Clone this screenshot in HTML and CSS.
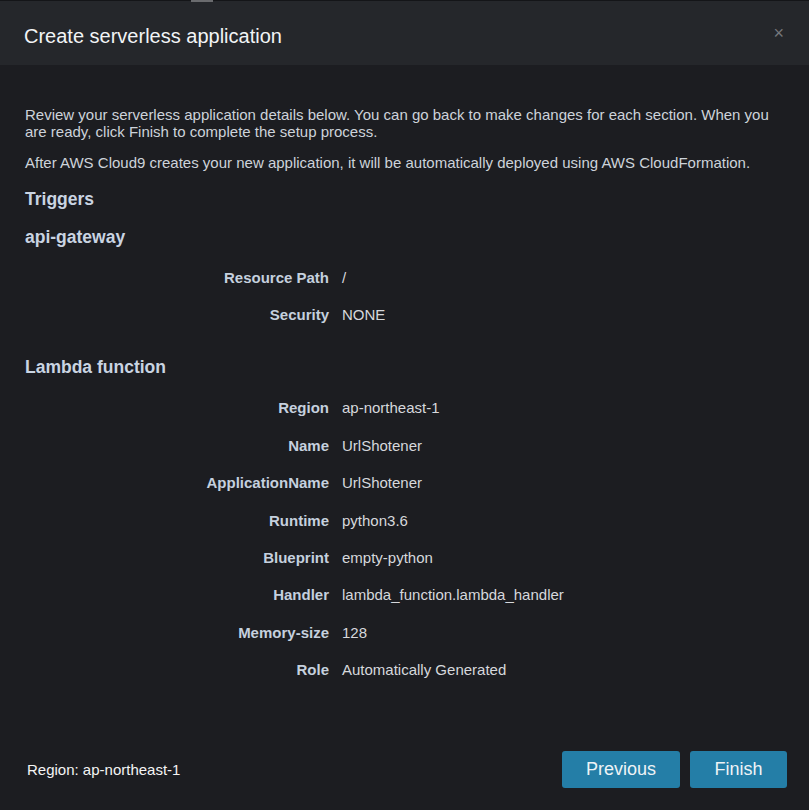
FILE: index.html
```html
<!DOCTYPE html>
<html>
<head>
<meta charset="utf-8">
<link rel="stylesheet" href="styles.css">
</head>
<body>
<div class="topline"><span class="tab"></span></div>
<div class="dialog">
  <header class="head">
    <h1 class="title">Create serverless application</h1>
    <span class="close">×</span>
  </header>
  <main class="content">
    <p class="intro">Review your serverless application details below. You can go back to make changes for each section. When you are ready, click Finish to complete the setup process.</p>
    <p class="intro">After AWS Cloud9 creates your new application, it will be automatically deployed using AWS CloudFormation.</p>
    <h2 class="h-main">Triggers</h2>
    <h3 class="h-sub">api-gateway</h3>
    <dl class="details">
      <div class="row"><dt>Resource Path</dt><dd>/</dd></div>
      <div class="row"><dt>Security</dt><dd>NONE</dd></div>
    </dl>
    <h3 class="h-sub h-lambda">Lambda function</h3>
    <dl class="details">
      <div class="row"><dt>Region</dt><dd>ap-northeast-1</dd></div>
      <div class="row"><dt>Name</dt><dd>UrlShotener</dd></div>
      <div class="row"><dt>ApplicationName</dt><dd>UrlShotener</dd></div>
      <div class="row"><dt>Runtime</dt><dd>python3.6</dd></div>
      <div class="row"><dt>Blueprint</dt><dd>empty-python</dd></div>
      <div class="row"><dt>Handler</dt><dd>lambda_function.lambda_handler</dd></div>
      <div class="row"><dt>Memory-size</dt><dd>128</dd></div>
      <div class="row"><dt>Role</dt><dd>Automatically Generated</dd></div>
    </dl>
  </main>
  <footer class="foot">
    <span class="region">Region: ap-northeast-1</span>
    <div class="buttons">
      <button class="btn btn-prev">Previous</button>
      <button class="btn btn-finish">Finish</button>
    </div>
  </footer>
</div>
</body>
</html>
```
FILE: styles.css
```css
html, body {
  margin: 0;
  padding: 0;
  background: #1c1d21;
  font-family: "Liberation Sans", Arial, sans-serif;
  color: #d6d8dc;
}
.topline {
  height: 1px;
  background: #141518;
  position: relative;
}
.tab {
  position: absolute;
  left: 191px;
  top: 0;
  width: 22px;
  height: 2px;
  background: #6a6b6e;
}
.dialog {
  width: 809px;
  height: 809px;
  display: flex;
  flex-direction: column;
}
.head {
  height: 64px;
  background: #25272b;
  display: flex;
  align-items: center;
  justify-content: space-between;
  padding: 6px 24px 0 24px;
  box-sizing: border-box;
}
.title {
  margin: 0;
  font-size: 20px;
  font-weight: normal;
  color: #f2f4f6;
}
.close {
  color: #75777b;
  font-size: 18px;
  margin-top: -5px;
  margin-right: 1px;
}
.content {
  flex: 1;
  padding: 41px 25px 0 25px;
}
.intro {
  margin: 0 0 14px 0;
  font-size: 15px;
  line-height: 17px;
  color: #cdd3da;
}
.intro + .intro {
  margin-bottom: 18px;
}
.h-main {
  margin: 0 0 17px 0;
  font-size: 17.5px;
  font-weight: bold;
  color: #c9d4e2;
}
.h-sub {
  margin: 0 0 21px 0;
  font-size: 17.5px;
  font-weight: bold;
  color: #c9d4e2;
}
.h-lambda {
  margin-top: 34px;
}
.details {
  margin: 0;
  display: flex;
  flex-direction: column;
  gap: 20.4px;
}
.row {
  display: flex;
  align-items: baseline;
  font-size: 15px;
  line-height: 17px;
}
.row dt {
  width: 304px;
  text-align: right;
  font-weight: bold;
  color: #c5d0de;
}
.row dd {
  margin: 0 0 0 13px;
  color: #d6d8dc;
}
.foot {
  height: 82px;
  display: flex;
  align-items: center;
  justify-content: space-between;
  padding: 0 22px 0 27px;
}
.region {
  font-size: 15px;
  color: #f4f4f4;
}
.buttons {
  display: flex;
  gap: 10px;
}
.btn {
  height: 37px;
  border: none;
  border-radius: 3px;
  background: #247ea7;
  color: #eef3f6;
  font-family: "Liberation Sans", Arial, sans-serif;
  font-size: 18px;
  padding: 0;
}
.btn-prev { width: 118px; }
.btn-finish { width: 97px; }
```
